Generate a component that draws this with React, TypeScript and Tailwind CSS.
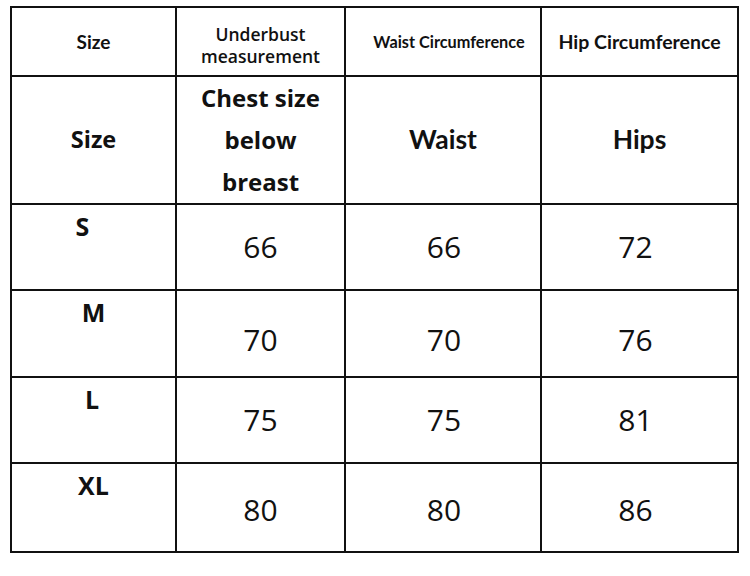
import React from 'react';

const lato = { fontFamily: 'Lato, "Open Sans", sans-serif' };

type Row = { size: string; values: number[]; shift: string; labelShift: string };

const rows: Row[] = [
    { size: 'S', values: [66, 66, 72], shift: 'pt-0', labelShift: 'pr-[22px]' },
    { size: 'M', values: [70, 70, 76], shift: 'pt-[13px]', labelShift: 'pr-0' },
    { size: 'L', values: [75, 75, 81], shift: 'pt-0', labelShift: 'pr-[3px]' },
    { size: 'XL', values: [80, 80, 86], shift: 'pt-[4px]', labelShift: 'pr-0' },
];

const cell = 'border-r-2 border-b-2 border-[#111] flex justify-center';

export default function App() {
    return (
        <div className="w-[750px] h-[576px] bg-white pt-[6px] pl-[10px] text-[#111] font-['Open_Sans',sans-serif]">
            <div className="grid grid-cols-[165px_169px_196px_197px] grid-rows-[69px_128px_86px_87px_86px_89px] border-l-2 border-t-2 border-[#111] w-fit">
                {/* header row */}
                <div className={`${cell} items-center`}>
                    <span className="text-[19px] font-bold pt-[1px]" style={lato}>Size</span>
                </div>
                <div className={`${cell} items-center`}>
                    <span className="text-[17.5px] font-semibold leading-[22px] text-center pt-[6px]">Underbust<br />measurement</span>
                </div>
                <div className={`${cell} items-center pl-[12px]`}>
                    <span className="text-[16.3px] font-bold pt-[1px]" style={lato}>Waist Circumference</span>
                </div>
                <div className={`${cell} items-center`}>
                    <span className="text-[19.5px] font-bold pt-[1px]" style={lato}>Hip Circumference</span>
                </div>

                {/* column titles */}
                <div className={`${cell} items-center`}>
                    <span className="text-[23.5px] font-bold">Size</span>
                </div>
                <div className={`${cell} items-center`}>
                    <span className="text-[24px] font-bold leading-[42px] text-center">Chest size<br />below<br />breast</span>
                </div>
                <div className={`${cell} items-center`}>
                    <span className="text-[26.5px] font-bold" style={lato}>Waist</span>
                </div>
                <div className={`${cell} items-center`}>
                    <span className="text-[26.5px] font-bold" style={lato}>Hips</span>
                </div>

                {rows.map(r => (
                    <React.Fragment key={r.size}>
                        <div className={`${cell} items-start pt-[6px] ${r.labelShift}`}>
                            <span className="text-[25px] font-bold leading-[30px]">{r.size}</span>
                        </div>
                        {r.values.map((v, i) => (
                            <div key={i} className={`${cell} items-center ${r.shift} ${i === 1 ? 'pl-[2px]' : ''} ${i === 2 ? 'pr-[8px]' : ''}`}>
                                <span className="text-[30px] leading-none">{v}</span>
                            </div>
                        ))}
                    </React.Fragment>
                ))}
            </div>
        </div>
    );
}
